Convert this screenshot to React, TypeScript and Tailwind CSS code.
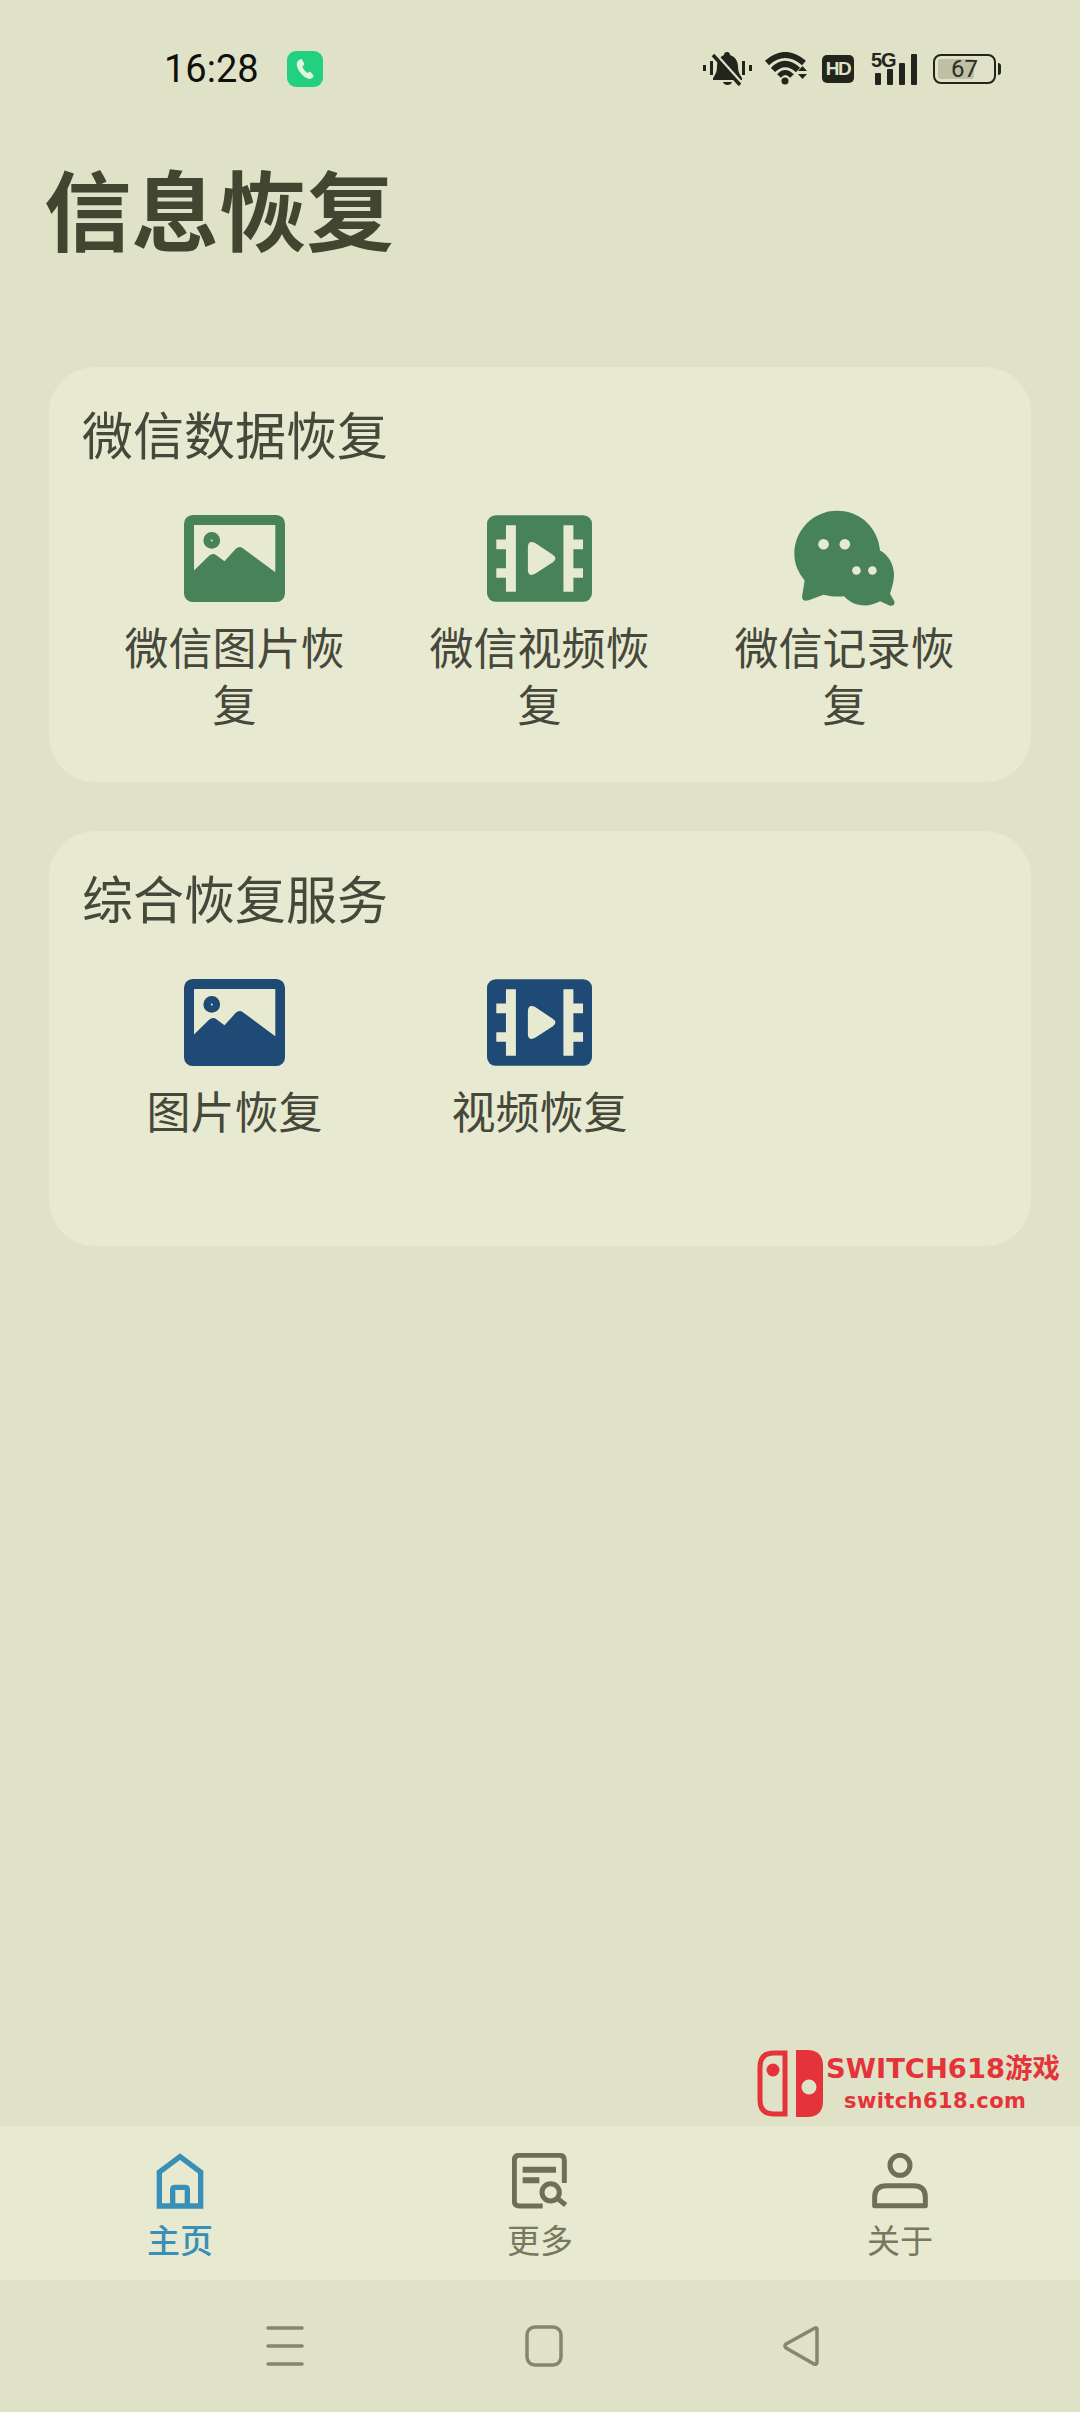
const CARD = "#e7ead0";
const GREEN = "#478259";
const BLUE = "#1f4a75";

function ImageIcon({ color }: { color: string }) {
  return (
    <svg width="101" height="87" viewBox="72 75 302 260">
      <rect x="72" y="75" width="302" height="260" rx="26" fill={color} />
      <path d="M102 105H345V246L248 174Q237 166 227 176L193 213L170 196Q158 187 147 197L102 241Z" fill={CARD} />
      <circle cx="155" cy="151" r="25" fill={color} />
      <circle cx="155" cy="151" r="3" fill={CARD} />
    </svg>
  );
}

function VideoIcon({ color }: { color: string }) {
  return (
    <svg width="105" height="87" viewBox="980 75 316 260">
      <rect x="980" y="75" width="316" height="260" rx="26" fill={color} />
      <path d="M1037 105H1067V305H1037V263H1008V234H1037V177H1008V148H1037Z" fill={CARD} />
      <path d="M1240 105H1210V305H1240V263H1269V234H1240V177H1269V148H1240Z" fill={CARD} />
      <path d="M1103 172Q1103 148 1125 158L1178 194Q1194 205 1178 216L1125 251Q1103 262 1103 238Z" fill={CARD} />
    </svg>
  );
}

function WechatIcon({ color }: { color: string }) {
  return (
    <svg width="101" height="97" viewBox="72 60 302 292">
      <path d="M200 62C275 62 325 118 330 182C355 195 373 225 372 258C371 280 364 298 360 312L373 335Q376 350 360 348L330 335C295 355 250 352 222 320C200 322 180 320 160 315L115 332Q92 338 96 315L103 272C85 250 72 225 72 192C72 120 130 62 200 62Z" fill={color} />
      <circle cx="160" cy="163" r="16" fill={CARD} />
      <circle cx="224" cy="163" r="16" fill={CARD} />
      <circle cx="259" cy="242" r="13" fill={CARD} />
      <circle cx="307" cy="242" r="13" fill={CARD} />
    </svg>
  );
}

function Item({ icon, label }: { icon: React.ReactNode; label: string }) {
  return (
    <div className="flex flex-col items-center">
      <div className="flex h-[97px] items-center justify-center">{icon}</div>
      <div className="mt-[11px] w-[225px] text-center text-[44px] leading-[57px] text-[#45483a]">{label}</div>
    </div>
  );
}

function Card({ title, children }: { title: string; children: React.ReactNode }) {
  return (
    <section className="h-[415px] rounded-[46px] bg-[#e7ead0] pt-[33px]">
      <h2 className="pl-[33px] text-[51px] leading-[66px] font-normal text-[#45483a]">{title}</h2>
      <div className="mt-[44px] grid grid-cols-3 px-[33px]" style={{ gridTemplateColumns: "305px 305px 305px" }}>
        {children}
      </div>
    </section>
  );
}

function StatusIcons() {
  const c = "#23241c";
  return (
    <div className="flex items-center">
      <svg width="49" height="34" viewBox="0 0 49 34" fill={c}>
        <rect x="0" y="13" width="3" height="6" />
        <rect x="7" y="9" width="3" height="14" />
        <rect x="39" y="9" width="3" height="14" />
        <rect x="46" y="13" width="3" height="6" />
        <path d="M24 0q3 0 3 3c6 2 8 7 8 12 0 5 2 8 4 11v2H10v-2c2-3 4-6 4-11 0-5 2-10 7-12q0-3 3-3Z" />
        <path d="M20 30h9q-1 3-4.500 3t-4.500-3Z" />
        <path d="M12 3l26 29" stroke="#dfe2c6" strokeWidth="5" />
        <path d="M10 3l27 30" stroke={c} strokeWidth="3.500" />
      </svg>
      <svg className="ml-[13px]" width="45" height="33" viewBox="0 0 45 33">
        <path d="M2 11Q20 -5 39 11" stroke={c} strokeWidth="6" fill="none" />
        <path d="M8 18Q20 6 33 18" stroke={c} strokeWidth="6" fill="none" />
        <path d="M14 24Q20 17 27 24" stroke={c} strokeWidth="5" fill="none" />
        <circle cx="20" cy="29" r="3.500" fill={c} />
        <path d="M33 19L37.500 14L42 19ZM33 22L37.500 27L42 22Z" fill={c} />
      </svg>
      <div className="ml-[12px] flex h-[28px] w-[32px] items-center justify-center rounded-[5px] bg-[#23241c] text-[19px] leading-none font-bold tracking-[-1.500px] text-[#dfe2c6] [font-family:'Liberation_Sans',sans-serif]">
        HD
      </div>
      <div className="relative ml-[17px] h-[32px] w-[46px]">
        <span className="absolute top-[-3px] left-0 text-[20px] leading-[20px] font-bold tracking-[-1px] text-[#23241c] [font-family:'Liberation_Sans',sans-serif]">5G</span>
        <svg className="absolute inset-0" width="46" height="32" viewBox="0 0 46 32" fill={c}>
          <rect x="4" y="20" width="6" height="12" rx="1" />
          <rect x="16" y="16" width="6" height="16" rx="1" />
          <rect x="28" y="10" width="6" height="22" rx="1" />
          <rect x="40" y="1" width="6" height="31" rx="1" />
        </svg>
      </div>
      <div className="ml-[16px] flex items-center">
        <div className="relative flex h-[30px] w-[63px] items-center justify-center overflow-hidden rounded-[8px] border-[2.500px] border-[#23241c]">
          <div className="absolute top-[3px] bottom-[3px] left-[3px] w-[36px] rounded-[3px] bg-[#bdbfa6]" />
          <span className="relative text-[24px] leading-none text-[#2b2c22] [font-family:Roboto,sans-serif]">67</span>
        </div>
        <div className="ml-[2px] h-[12px] w-[3px] rounded-r-sm bg-[#23241c]" />
      </div>
    </div>
  );
}

function NavItem({ icon, label, active }: { icon: React.ReactNode; label: string; active?: boolean }) {
  return (
    <div className="flex w-[360px] flex-col items-center pt-[27px]">
      <div className="flex h-[56px] items-center justify-center">{icon}</div>
      <div className={active ? "mt-[7px] text-[33px] leading-[46px] font-medium text-[#3a8fb7]" : "mt-[7px] text-[33px] leading-[46px] text-[#77785e]"}>
        {label}
      </div>
    </div>
  );
}

export default function App() {
  const nav = "#6e6f53";
  const sys = "#85866c";
  return (
    <div className="relative flex h-[2412px] w-[1080px] flex-col overflow-hidden bg-[#dfe2c6] [font-family:'Noto_Sans_CJK_SC','Noto_Sans',sans-serif]">
      <header className="flex h-[138px] items-center justify-between pr-[79px] pb-[1px] pl-[164px]">
        <div className="flex items-center">
          <span className="text-[38px] leading-none text-[#0f100c] [font-family:Roboto,sans-serif]">16:28</span>
          <div className="ml-[28px] flex h-[36px] w-[36px] items-center justify-center rounded-[9px] bg-[#22d07f]">
            <svg width="22" height="22" viewBox="0 0 24 24" fill="#e7f5e0">
              <path d="M5 2.500l2-1.200q1.400-.5 2 .7l2 4q.5 1.200-.5 2l-1.500 1.300q1 3.500 5.500 7l2-1q1.200-.6 2 .4l2.500 3q.8 1.200-.3 2.200l-1.700 1.400q-2 1.200-5-.5C8 19 3.500 12 3 7q-.2-3 2-4.500Z" />
            </svg>
          </div>
        </div>
        <StatusIcons />
      </header>

      <main className="flex-1 px-[49px]">
        <h1 className="mt-[-5px] ml-[-5px] text-[87.500px] leading-[148px] font-bold text-[#424530]">信息恢复</h1>
        <div className="mt-[86px] flex flex-col gap-[49px]">
          <Card title="微信数据恢复">
            <Item icon={<ImageIcon color={GREEN} />} label="微信图片恢复" />
            <Item icon={<VideoIcon color={GREEN} />} label="微信视频恢复" />
            <Item icon={<WechatIcon color={GREEN} />} label="微信记录恢复" />
          </Card>
          <Card title="综合恢复服务">
            <Item icon={<ImageIcon color={BLUE} />} label="图片恢复" />
            <Item icon={<VideoIcon color={BLUE} />} label="视频恢复" />
          </Card>
        </div>
      </main>

      <div className="absolute top-[2050px] left-[757px] flex h-[67px] items-start">
        <svg width="66" height="67" viewBox="0 0 66 67">
          <path d="M28 3H17Q3 3 3 17V50Q3 64 17 64H28Z" fill="none" stroke="#e5333a" strokeWidth="5" />
          <circle cx="16" cy="20" r="6.500" fill="#e5333a" />
          <path d="M39 0H50Q66 0 66 16V51Q66 67 50 67H39Z" fill="#e5333a" />
          <circle cx="52" cy="37" r="7.500" fill="#dfe2c6" />
        </svg>
      </div>
      <div className="absolute top-[2050px] left-[826px] flex w-[236px] flex-col items-start font-bold text-[#e5333a]">
        <div className="h-[38px] text-[27.400px] leading-[38px] whitespace-nowrap [font-family:'DejaVu_Sans','Noto_Sans_CJK_SC',sans-serif]">SWITCH618游戏</div>
        <div className="ml-[18px] text-[21px] leading-[26px] tracking-[0.400px] whitespace-nowrap [font-family:'DejaVu_Sans',sans-serif]">switch618.com</div>
      </div>

      <nav className="flex h-[154px] bg-[#e7ead0]">
        <NavItem
          active
          label="主页"
          icon={
            <svg width="48" height="56" viewBox="108 70 144 166" fill="none" stroke="#3a8fb7" strokeWidth="16">
              <path d="M180 80L118 126V228H242V126Z" />
              <path d="M158 228V178Q158 172 165 172H195Q202 172 202 178V228" />
            </svg>
          }
        />
        <NavItem
          label="更多"
          icon={
            <svg width="56" height="56" viewBox="1178 70 168 168" fill="none" stroke={nav} strokeWidth="15">
              <path d="M1270 229H1200Q1185 229 1185 214V92Q1185 77 1200 77H1320Q1335 77 1335 92V160" />
              <path d="M1210 120H1310M1210 152H1260" strokeWidth="18" />
              <circle cx="1294" cy="188" r="26" />
              <path d="M1314 206L1339 226" strokeWidth="15" />
            </svg>
          }
        />
        <NavItem
          label="关于"
          icon={
            <svg width="56" height="56" viewBox="756 70 168 168" fill="none" stroke={nav} strokeWidth="15">
              <circle cx="840" cy="107" r="30" />
              <path d="M764 228V202Q764 168 800 168H880Q916 168 916 202V228Z" strokeLinejoin="round" />
            </svg>
          }
        />
      </nav>

      <footer className="flex h-[132px] items-start justify-between pt-[45px] pr-[261px] pl-[266px]">
        <svg width="38" height="42" viewBox="0 0 38 42" stroke={sys} strokeWidth="3.500" strokeLinecap="round">
          <path d="M2 3H36M2 21H36M2 39H36" />
        </svg>
        <svg width="38" height="42" viewBox="0 0 38 42" fill="none" stroke={sys} strokeWidth="3.500">
          <rect x="2" y="2" width="34" height="38" rx="8" />
        </svg>
        <svg width="36" height="42" viewBox="0 0 36 42" fill="none" stroke={sys} strokeWidth="3.500" strokeLinejoin="round">
          <path d="M32 3Q34 2 34 5V37Q34 40 31 39L3 23Q1 21 3 19Z" />
        </svg>
      </footer>
    </div>
  );
}
